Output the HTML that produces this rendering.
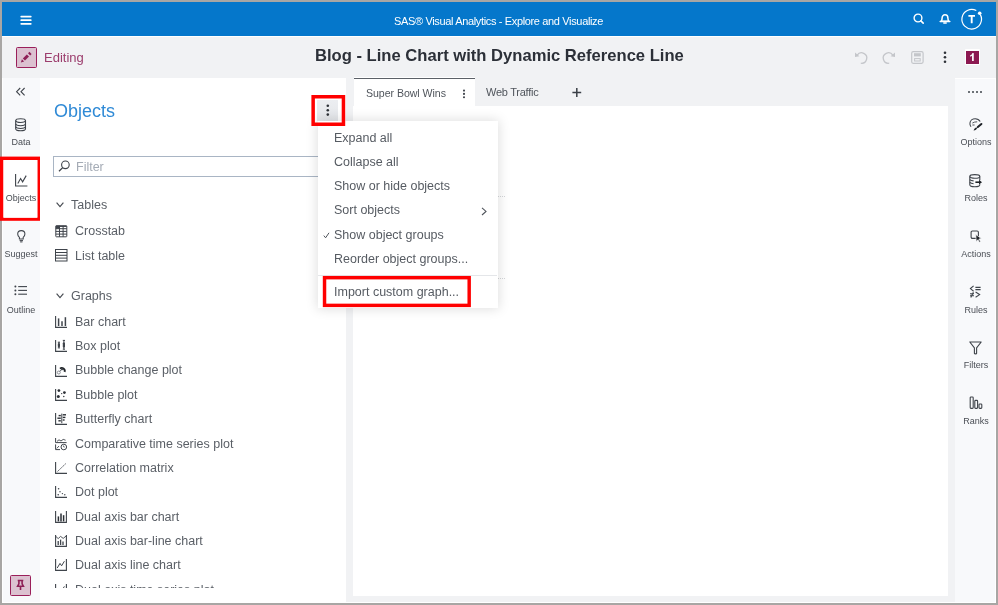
<!DOCTYPE html>
<html><head><meta charset="utf-8">
<style>
html,body{margin:0;padding:0;}
body{width:998px;height:605px;position:relative;overflow:hidden;background:#a8a6a4;font-family:"Liberation Sans",sans-serif;}
.a{position:absolute;}
.t{position:absolute;white-space:nowrap;line-height:1;}
.red{position:absolute;border:3.5px solid #ff0000;box-sizing:border-box;}
.lab{position:absolute;white-space:nowrap;line-height:1;font-size:9px;color:#4a4e55;text-align:center;}
.li{font-size:12.5px;color:#5a5f66;}
.mi{font-size:12.5px;color:#565b62;}
svg{position:absolute;overflow:visible;}
.t,.lab{will-change:transform;}
</style></head><body>
<div class="a" style="left:2px;top:2px;width:994px;height:601px;background:#fff"></div>
<div class="a" style="left:2px;top:2px;width:994.3px;height:33.8px;background:#0577cb"></div>
<div class="a" style="left:2px;top:37.1px;width:994px;height:41px;background:#f1f2f4"></div>
<div class="a" style="left:2.5px;top:78px;width:37.7px;height:523.5px;background:#f8f9fb"></div>
<div class="a" style="left:346.2px;top:78px;width:609px;height:523.8px;background:#f1f2f4"></div>
<div class="a" style="left:954.5px;top:79px;width:40.8px;height:522.5px;background:#f8f9fb"></div>

<svg style="left:20px;top:15px" width="12" height="10" viewBox="0 0 12 10"><g stroke="#fff" stroke-width="1.7" stroke-linecap="round"><line x1="1.2" y1="1.6" x2="10.8" y2="1.6"/><line x1="1.2" y1="5.2" x2="10.8" y2="5.2"/><line x1="1.2" y1="8.8" x2="10.8" y2="8.8"/></g></svg>
<div class="t" style="left:394px;top:15.5px;font-size:11px;color:#fff;letter-spacing:-0.35px">SAS® Visual Analytics - Explore and Visualize</div>
<svg style="left:908px;top:8px" width="20" height="20" viewBox="0 0 20 20"><circle cx="10" cy="10" r="3.9" fill="none" stroke="#fff" stroke-width="1.4"/><line x1="12.9" y1="12.9" x2="15.2" y2="15.1" stroke="#fff" stroke-width="1.6" stroke-linecap="round"/></svg>
<svg style="left:939px;top:14px" width="12" height="10" viewBox="0 0 12 10"><path d="M2.2 7.2 C3 6 3.1 5 3.1 4 C3.1 2 4.3 0.8 6 0.8 C7.7 0.8 8.9 2 8.9 4 C8.9 5 9 6 9.8 7.2 Z" fill="none" stroke="#fff" stroke-width="1.5" stroke-linejoin="round"/><line x1="1.2" y1="7.4" x2="10.8" y2="7.4" stroke="#fff" stroke-width="1.5" stroke-linecap="round"/><path d="M4.8 9 h2.4" stroke="#fff" stroke-width="1.5" stroke-linecap="round"/></svg>
<svg style="left:961px;top:9px" width="22" height="21" viewBox="0 0 22 21"><path d="M19.35 5.60 A9.8 9.8 0 1 1 15.30 1.55" fill="none" stroke="#fff" stroke-width="1.2"/><circle cx="18.7" cy="4.2" r="1.8" fill="#fff"/><path d="M7.4 6.9 h6.6 M10.7 6.9 v7.4" stroke="#fff" stroke-width="1.9"/></svg>
<div class="a" style="left:16px;top:47px;width:21px;height:21px;box-sizing:border-box;border:1.8px solid #9a1f5a;background:#dcc1d0;border-radius:1.5px"></div>
<svg style="left:20px;top:51px" width="13" height="13" viewBox="0 0 13 13"><g stroke="#8e1f56" stroke-width="3.1"><line x1="3.9" y1="8.5" x2="7.9" y2="4.5"/><line x1="9.1" y1="3.3" x2="10.5" y2="1.9"/></g><path d="M0.9 11.5 L1.9 8.3 L4.1 10.5 Z" fill="#8e1f56"/></svg>
<div class="t" style="left:43.5px;top:50.5px;font-size:13px;color:#9c3d6d">Editing</div>
<div class="t" style="left:314.5px;top:47.5px;font-size:16.6px;font-weight:bold;color:#2c3038">Blog - Line Chart with Dynamic Reference Line</div>
<svg style="left:854px;top:51px" width="14" height="13" viewBox="0 0 14 13"><path d="M3.2 4.2 A5.2 5.2 0 1 1 6.8 12.2" fill="none" stroke="#c4c6ca" stroke-width="1.3"/><path d="M1 1.4 L1 6 L5.4 5.2 Z" fill="#c4c6ca"/></svg>
<svg style="left:882px;top:51px" width="14" height="13" viewBox="0 0 14 13"><path d="M10.8 4.2 A5.2 5.2 0 1 0 7.2 12.2" fill="none" stroke="#c4c6ca" stroke-width="1.3"/><path d="M13 1.4 L13 6 L8.6 5.2 Z" fill="#c4c6ca"/></svg>
<svg style="left:911px;top:51px" width="13" height="13" viewBox="0 0 13 13"><rect x="0.7" y="0.7" width="11.4" height="11.6" rx="1.5" fill="none" stroke="#c4c6ca" stroke-width="1.2"/><rect x="3" y="2.2" width="6.8" height="3.2" fill="#c4c6ca"/><rect x="3.6" y="7.6" width="5.6" height="2.4" fill="none" stroke="#c4c6ca" stroke-width="1"/></svg>
<svg style="left:943px;top:51px" width="4" height="13" viewBox="0 0 4 13"><circle cx="2" cy="1.8" r="1.3" fill="#2e3238"/><circle cx="2" cy="6.3" r="1.3" fill="#2e3238"/><circle cx="2" cy="10.8" r="1.3" fill="#2e3238"/></svg>
<div class="a" style="left:965px;top:49.3px;width:15px;height:16px;background:#fff;border-radius:1px"></div>
<div class="a" style="left:966px;top:50.5px;width:12.8px;height:13.7px;background:#8c1951"></div>
<svg style="left:966px;top:50.5px" width="13" height="14" viewBox="0 0 13 14"><path d="M6.9 2.3 V10" stroke="#fff" stroke-width="1.7"/><path d="M7.6 2 L3.9 4.7 L4.6 5.8 L6.9 4.1 Z" fill="#fff"/></svg>
<svg style="left:15px;top:87px" width="11" height="10" viewBox="0 0 11 10"><path d="M5.2 1 L1.6 4.7 L5.2 8.4 M9.6 1 L6 4.7 L9.6 8.4" fill="none" stroke="#3f444b" stroke-width="1.1"/></svg>
<svg style="left:15px;top:117.5px" width="12" height="14" viewBox="0 0 12 14"><g fill="none" stroke="#3f444b" stroke-width="1.1"><ellipse cx="5.6" cy="2.6" rx="4.9" ry="1.9"/><path d="M0.7 2.6 V10.8 C0.7 12 2.9 12.8 5.6 12.8 C8.3 12.8 10.5 12 10.5 10.8 V2.6"/><path d="M0.7 5.8 C0.7 7 2.9 7.7 5.6 7.7 C8.3 7.7 10.5 7 10.5 5.8"/><path d="M0.7 8.6 C0.7 9.8 2.9 10.5 5.6 10.5 C8.3 10.5 10.5 9.8 10.5 8.6"/></g></svg>
<div class="lab" style="left:1.0px;top:138.0px;width:40px">Data</div>
<div class="a" style="left:2.5px;top:157px;width:38px;height:63.5px;background:#fff"></div>
<svg style="left:15px;top:174px" width="13" height="13" viewBox="0 0 13 13"><path d="M0.6 0 V12 H12.4" fill="none" stroke="#3f444b" stroke-width="1.1"/><path d="M2.8 9.5 L5.6 4.5 L7.6 7.8 L11.2 1.6" fill="none" stroke="#3f444b" stroke-width="1.1"/></svg>
<div class="lab" style="left:1.0px;top:194.0px;width:40px">Objects</div>
<svg style="left:0;top:0" width="998" height="605"><rect x="1.70" y="158.30" width="37.40" height="60.80" fill="none" stroke="#ff0000" stroke-width="3.4"/><rect x="4.15" y="160.75" width="32.5" height="56.6" fill="none" stroke="#fff" stroke-width="1.3" opacity="0.8"/></svg>
<svg style="left:16.6px;top:230px" width="9" height="13" viewBox="0 0 9 13"><path d="M2.4 7.4 C1.3 6.4 0.7 5.2 0.7 4 C0.7 1.9 2.4 0.6 4.3 0.6 C6.2 0.6 7.9 1.9 7.9 4 C7.9 5.2 7.3 6.4 6.2 7.4 V9 H2.4 Z" fill="none" stroke="#3f444b" stroke-width="1.05"/><path d="M2.6 10.6 H6 M3.1 11.9 H5.5" stroke="#3f444b" stroke-width="1"/></svg>
<div class="lab" style="left:0.8000000000000007px;top:249.5px;width:40px">Suggest</div>
<svg style="left:14px;top:285px" width="14" height="11" viewBox="0 0 14 11"><g fill="#3f444b"><circle cx="1.4" cy="1.6" r="1"/><circle cx="1.4" cy="5.4" r="1"/><circle cx="1.4" cy="9.2" r="1"/></g><g stroke="#3f444b" stroke-width="1.1"><line x1="4.2" y1="1.6" x2="13" y2="1.6"/><line x1="4.2" y1="5.4" x2="13" y2="5.4"/><line x1="4.2" y1="9.2" x2="13" y2="9.2"/></g></svg>
<div class="lab" style="left:0.8000000000000007px;top:305.5px;width:40px">Outline</div>
<div class="a" style="left:10px;top:575px;width:21px;height:21px;box-sizing:border-box;border:1.8px solid #9a1f5a;background:#dcc1d0;border-radius:1.5px"></div>
<svg style="left:14.2px;top:579px" width="13" height="14" viewBox="0 0 13 14"><path d="M3.7 1.5 H9.3 M4.9 1.5 L4.9 4.8 L3.6 7.2 H9.4 L8.1 4.8 L8.1 1.5 M6.5 7.2 V11" fill="none" stroke="#8e1f56" stroke-width="1.6"/></svg>
<div class="a" style="left:353.5px;top:77.9px;width:121.1px;height:28.1px;background:#fff;border-top:1.85px solid #5b6067;box-sizing:border-box;box-shadow:0 -1px 0 #fff"></div>
<div class="t" style="left:365.7px;top:87.5px;font-size:10.6px;color:#50555c;letter-spacing:-0.05px">Super Bowl Wins</div>
<svg style="left:461.8px;top:88.5px" width="4" height="11" viewBox="0 0 4 11"><circle cx="2" cy="1.6" r="1.05" fill="#3f444b"/><circle cx="2" cy="4.9" r="1.05" fill="#3f444b"/><circle cx="2" cy="8.2" r="1.05" fill="#3f444b"/></svg>
<div class="t" style="left:486px;top:87px;font-size:11px;color:#50555c;letter-spacing:-0.25px">Web Traffic</div>
<svg style="left:572px;top:88px" width="10" height="10" viewBox="0 0 10 10"><path d="M4.8 0 V9 M0.4 4.5 H9.2" stroke="#3a3f46" stroke-width="1.5"/></svg>
<div class="a" style="left:353px;top:106px;width:595px;height:489.7px;background:#fff"></div>
<div class="a" style="left:497px;top:195.5px;width:8px;height:0;border-top:1px dotted #d4d6d9"></div>
<div class="a" style="left:497px;top:277.5px;width:8px;height:0;border-top:1px dotted #d4d6d9"></div>
<div class="a" style="left:40.2px;top:78px;width:306px;height:524px;background:#fff"></div>
<div class="t" style="left:53.5px;top:102px;font-size:18px;color:#2f8ad6">Objects</div>
<div class="a" style="left:317.3px;top:100px;width:21px;height:21px;background:linear-gradient(#eceef1,#e3e5e9)"></div>
<svg style="left:325px;top:103px" width="6" height="14" viewBox="0 0 6 14"><circle cx="2.8" cy="2.7" r="1.3" fill="#2e3238"/><circle cx="2.8" cy="7.2" r="1.3" fill="#2e3238"/><circle cx="2.8" cy="11.6" r="1.3" fill="#2e3238"/></svg>
<div class="a" style="left:53px;top:156px;width:290px;height:20.8px;box-sizing:border-box;border:1px solid #a9b5c4;background:#fff"></div>
<svg style="left:58px;top:160px" width="13" height="12" viewBox="0 0 13 12"><circle cx="7.4" cy="4.8" r="3.8" fill="none" stroke="#3f444b" stroke-width="1.1"/><line x1="4.7" y1="7.6" x2="1" y2="11.2" stroke="#3f444b" stroke-width="1.3"/></svg>
<div class="t" style="left:75.5px;top:160.5px;font-size:12.5px;color:#a4abb5">Filter</div>
<svg style="left:56px;top:202px" width="9" height="6" viewBox="0 0 9 6"><path d="M0.6 0.6 L4 4.7 L7.4 0.6" fill="none" stroke="#464a51" stroke-width="1.15"/></svg>
<div class="t li" style="left:70.5px;top:199px">Tables</div>
<svg style="left:54.5px;top:224.5px" width="13" height="13" viewBox="0 0 13 13"><g fill="none" stroke="#3f444b" stroke-width="1"><rect x="0.8" y="0.8" width="11" height="11" rx="0.6"/><path d="M0.8 3.7 H11.8 M0.8 6.4 H11.8 M0.8 9.1 H11.8 M4.5 0.8 V11.8 M8.1 0.8 V11.8"/></g><rect x="0.8" y="0.8" width="3.7" height="2.9" fill="#3f444b"/><path d="M0.8 1.3 H11.8" stroke="#3f444b" stroke-width="1.3"/></svg>
<div class="t li" style="left:75px;top:225px">Crosstab</div>
<svg style="left:54.5px;top:249px" width="13" height="13" viewBox="0 0 13 13"><g fill="none" stroke="#3f444b" stroke-width="1"><rect x="0.5" y="0.5" width="11.5" height="11.5"/><path d="M0.5 3.5 H12 M0.5 6.3 H12 M0.5 9.1 H12"/></g></svg>
<div class="t li" style="left:75px;top:249.5px">List table</div>
<svg style="left:56px;top:293px" width="9" height="6" viewBox="0 0 9 6"><path d="M0.6 0.6 L4 4.7 L7.4 0.6" fill="none" stroke="#464a51" stroke-width="1.15"/></svg>
<div class="t li" style="left:70.5px;top:290px">Graphs</div>
<div class="a" style="left:40px;top:300px;width:306px;height:288.3px;overflow:hidden">
<svg style="left:14.8px;top:16.0px" width="12" height="12" viewBox="0 0 12 12"><path d="M0.6 0 V11.4 H12" fill="none" stroke="#3f444b" stroke-width="1.1"/><g stroke="#3f444b" stroke-width="1.5"><line x1="3.6" y1="2.4" x2="3.6" y2="10"/><line x1="7" y1="5.2" x2="7" y2="10"/><line x1="10.4" y1="1.2" x2="10.4" y2="10"/></g></svg>
<div class="t li" style="left:35px;top:15.80px">Bar chart</div>
<svg style="left:14.8px;top:40.34px" width="12" height="12" viewBox="0 0 12 12"><path d="M0.6 0 V11.4 H12" fill="none" stroke="#3f444b" stroke-width="1.1"/><g stroke="#3f444b" stroke-width="1"><line x1="3.9" y1="2.2" x2="3.9" y2="7.9"/><line x1="8.9" y1="0.4" x2="8.9" y2="9.2"/><line x1="2.8" y1="2.2" x2="5" y2="2.2"/><line x1="2.8" y1="7.9" x2="5" y2="7.9"/><line x1="7.8" y1="0.4" x2="10" y2="0.4"/><line x1="7.8" y1="9.2" x2="10" y2="9.2"/></g><rect x="2.8" y="3.3" width="2.2" height="3.6" rx="0.6" fill="#3f444b"/><rect x="7.8" y="2.6" width="2.2" height="4.8" rx="0.6" fill="#3f444b"/></svg>
<div class="t li" style="left:35px;top:40.14px">Box plot</div>
<svg style="left:14.8px;top:64.68px" width="12" height="12" viewBox="0 0 12 12"><path d="M0.6 0 V11.4 H12" fill="none" stroke="#3f444b" stroke-width="1.1"/><path d="M4.97 3.61 A2.9 2.9 0 0 1 9.56 6.82" fill="none" stroke="#1f2328" stroke-width="1.9"/><circle cx="7" cy="4.2" r="1.1" fill="#3f444b"/><line x1="6.2" y1="5" x2="4.4" y2="6.8" stroke="#3f444b" stroke-width="0.9"/><circle cx="3.8" cy="7.5" r="1.5" fill="none" stroke="#8a8e94" stroke-width="1"/></svg>
<div class="t li" style="left:35px;top:64.48px">Bubble change plot</div>
<svg style="left:14.8px;top:89.02px" width="12" height="12" viewBox="0 0 12 12"><path d="M0.6 0 V11.4 H12" fill="none" stroke="#3f444b" stroke-width="1.1"/><g fill="#2a2e34"><circle cx="3.9" cy="1.6" r="1.4"/><circle cx="9.4" cy="3.6" r="1.4"/><circle cx="3.3" cy="7.6" r="1.5"/><circle cx="6.7" cy="4.6" r="0.65"/><circle cx="8.8" cy="7.5" r="0.7"/></g></svg>
<div class="t li" style="left:35px;top:88.82px">Bubble plot</div>
<svg style="left:14.8px;top:113.36px" width="12" height="12" viewBox="0 0 12 12"><path d="M0.6 0 V11.4 H12" fill="none" stroke="#3f444b" stroke-width="1.1"/><line x1="6.8" y1="0.6" x2="6.8" y2="10.2" stroke="#3f444b" stroke-width="1"/><g stroke="#2a2e34" stroke-width="1.4"><line x1="3.6" y1="2.6" x2="5.8" y2="2.6"/><line x1="2.4" y1="5.2" x2="5.8" y2="5.2"/><line x1="3.4" y1="7.8" x2="5.8" y2="7.8"/><line x1="7.8" y1="1.8" x2="11" y2="1.8"/><line x1="7.8" y1="4.4" x2="10.4" y2="4.4"/><line x1="7.8" y1="7" x2="9.6" y2="7"/></g></svg>
<div class="t li" style="left:35px;top:113.16px">Butterfly chart</div>
<svg style="left:14.8px;top:137.7px" width="12" height="12" viewBox="0 0 12 12"><path d="M0.6 0 V4.6 H11.6" fill="none" stroke="#3f444b" stroke-width="1"/><path d="M2 3.4 L4 1.8 L6 3 L8.2 1.4 L10.6 2.2" fill="none" stroke="#3f444b" stroke-width="0.9"/><path d="M0.6 6.4 V11.6 H5" fill="none" stroke="#3f444b" stroke-width="1"/><path d="M1.8 10.4 L4 8" fill="none" stroke="#3f444b" stroke-width="0.9"/><circle cx="8.8" cy="9" r="2.8" fill="none" stroke="#3f444b" stroke-width="1"/><path d="M8.4 7.6 L9.2 9.4" stroke="#3f444b" stroke-width="1"/></svg>
<div class="t li" style="left:35px;top:137.50px">Comparative time series plot</div>
<svg style="left:14.8px;top:162.04px" width="12" height="12" viewBox="0 0 12 12"><path d="M0.6 0 V11.4 H12" fill="none" stroke="#3f444b" stroke-width="1.1"/><path d="M2.6 9.4 L10.8 1.6" fill="none" stroke="#3f444b" stroke-width="1" stroke-dasharray="1.6 1"/></svg>
<div class="t li" style="left:35px;top:161.84px">Correlation matrix</div>
<svg style="left:14.8px;top:186.38px" width="12" height="12" viewBox="0 0 12 12"><path d="M0.6 0 V11.4 H12" fill="none" stroke="#3f444b" stroke-width="1.1"/><g fill="#3f444b"><circle cx="3.6" cy="2.8" r="0.8"/><circle cx="5" cy="5.8" r="0.7"/><circle cx="3.2" cy="8.8" r="0.8"/><circle cx="7.4" cy="7.6" r="0.7"/><circle cx="9.8" cy="8.8" r="0.7"/></g></svg>
<div class="t li" style="left:35px;top:186.18px">Dot plot</div>
<svg style="left:14.8px;top:210.72px" width="12" height="12" viewBox="0 0 12 12"><path d="M0.6 0 V11.4 H11.4 V0" fill="none" stroke="#3f444b" stroke-width="1.1"/><g stroke="#2a2e34" stroke-width="1.5"><line x1="3.4" y1="5.4" x2="3.4" y2="10.4"/><line x1="6" y1="2.4" x2="6" y2="10.4"/><line x1="8.6" y1="4.2" x2="8.6" y2="10.4"/></g></svg>
<div class="t li" style="left:35px;top:210.52px">Dual axis bar chart</div>
<svg style="left:14.8px;top:235.06px" width="12" height="12" viewBox="0 0 12 12"><path d="M0.6 0 V11.4 H11.4 V0" fill="none" stroke="#3f444b" stroke-width="1.1"/><g stroke="#3f444b" stroke-width="1.3"><line x1="3.2" y1="6" x2="3.2" y2="10"/><line x1="5.6" y1="4.6" x2="5.6" y2="10"/><line x1="8" y1="6.4" x2="8" y2="10"/></g><path d="M0.6 1.2 L3.2 3.6 L5.6 1.4 L8.2 3.4 L11.4 0.8" fill="none" stroke="#3f444b" stroke-width="0.9"/></svg>
<div class="t li" style="left:35px;top:234.86px">Dual axis bar-line chart</div>
<svg style="left:14.8px;top:259.4px" width="12" height="12" viewBox="0 0 12 12"><path d="M0.6 0 V11.4 H11.4 V0" fill="none" stroke="#3f444b" stroke-width="1.1"/><path d="M2.2 9 L5 4.4 L6.6 6.8 L9.4 2.2" fill="none" stroke="#3f444b" stroke-width="1"/></svg>
<div class="t li" style="left:35px;top:259.20px">Dual axis line chart</div>
<svg style="left:14.8px;top:283.74px" width="12" height="12" viewBox="0 0 12 12"><g stroke="#3f444b" stroke-width="1.1"><line x1="0.6" y1="0" x2="0.6" y2="11.4"/><line x1="11.4" y1="0" x2="11.4" y2="11.4"/></g><path d="M2.6 9 L4.6 5 L6.6 7 L9.4 2.4" fill="none" stroke="#3f444b" stroke-width="1"/></svg>
<div class="t li" style="left:35px;top:283.54px">Dual axis time series plot</div>
</div>
<div class="a" style="left:317.8px;top:120.7px;width:180.4px;height:187.2px;background:#fff;box-shadow:0 0 11px 1px rgba(0,0,0,0.13)"></div>
<div class="t mi" style="left:333.5px;top:132.3px">Expand all</div>
<div class="t mi" style="left:333.5px;top:155.6px">Collapse all</div>
<div class="t mi" style="left:333.5px;top:180.1px">Show or hide objects</div>
<div class="t mi" style="left:333.5px;top:204.4px">Sort objects</div>
<div class="t mi" style="left:333.5px;top:228.6px">Show object groups</div>
<div class="t mi" style="left:333.5px;top:253.1px">Reorder object groups...</div>
<svg style="left:480.5px;top:206.5px" width="7" height="9" viewBox="0 0 7 9"><path d="M1 0.8 L5 4.4 L1 8" fill="none" stroke="#50555c" stroke-width="1.1"/></svg>
<svg style="left:322.5px;top:232px" width="7" height="7" viewBox="0 0 7 7"><path d="M0.8 3.6 L2.6 5.8 L6 0.8" fill="none" stroke="#50555c" stroke-width="1"/></svg>
<div class="a" style="left:318px;top:275px;width:179px;height:1px;background:#e4e6e9"></div>
<div class="t mi" style="left:333.5px;top:286.3px">Import custom graph...</div>
<svg style="left:0;top:0" width="998" height="605"><rect x="324.53" y="277.68" width="144.65" height="27.70" fill="none" stroke="#ff0000" stroke-width="3.45"/></svg>
<svg style="left:0;top:0" width="998" height="605"><rect x="313.15" y="96.75" width="30.30" height="27.50" fill="none" stroke="#ff0000" stroke-width="3.5"/></svg>
<svg style="left:967px;top:90px" width="17" height="4" viewBox="0 0 17 4"><g fill="#3f444b"><circle cx="2" cy="2" r="1"/><circle cx="6" cy="2" r="1"/><circle cx="10" cy="2" r="1"/><circle cx="14" cy="2" r="1"/></g></svg>
<svg style="left:968.5px;top:117.5px" width="14" height="14" viewBox="0 0 14 14"><path d="M2 8.8 C1.2 7.6 0.8 6.4 0.9 5.4 C1.1 2.4 3.6 0.7 6.2 0.7 C8.2 0.7 10.2 1.8 11.2 3.6" fill="none" stroke="#3f444b" stroke-width="1.1"/><path d="M3.4 5 C4.6 4.2 6.4 3.8 8.2 3.8 M3.4 7 H5.6" fill="none" stroke="#3f444b" stroke-width="0.9"/><line x1="12.4" y1="6" x2="8.8" y2="9.1" stroke="#1f2328" stroke-width="2" stroke-linecap="round"/><path d="M8.2 9.8 C7.8 11.4 6.6 12.6 4.6 12.6 C4.8 11.2 5.8 9.9 7.2 9.4 Z" fill="#1f2328"/></svg>
<div class="lab" style="left:955.5px;top:138.0px;width:40px">Options</div>
<svg style="left:968.5px;top:173.5px" width="14" height="14" viewBox="0 0 14 14"><g fill="none" stroke="#3f444b" stroke-width="1.1"><ellipse cx="5.8" cy="2.4" rx="5" ry="1.8"/><path d="M0.8 2.4 V10.8 C0.8 12 3 12.8 5.8 12.8 C8.6 12.8 10.8 12 10.8 10.8 V10.2 M10.8 2.4 V6"/><path d="M0.8 5.6 C1.6 6.4 3 6.8 4.6 6.9 M0.8 8.4 C1.6 9.2 3 9.6 4.6 9.7"/></g><path d="M6.4 8.2 H10.6" stroke="#1f2328" stroke-width="1.6"/><path d="M10 5.8 L13 8.2 L10 10.6 Z" fill="#1f2328"/></svg>
<div class="lab" style="left:955.5px;top:194.0px;width:40px">Roles</div>
<svg style="left:969.5px;top:229.5px" width="13" height="13" viewBox="0 0 13 13"><rect x="1.1" y="1" width="7.3" height="7.4" rx="1.3" fill="none" stroke="#3f444b" stroke-width="1.1"/><path d="M5.8 4.6 L11.4 8.6 L8.9 9.1 L10.6 11.6 L9.5 12.3 L7.9 9.8 L6.2 11.6 Z" fill="#1f2328" stroke="#f8f9fb" stroke-width="0.7"/></svg>
<div class="lab" style="left:955.5px;top:250.0px;width:40px">Actions</div>
<svg style="left:969px;top:284.5px" width="14" height="14" viewBox="0 0 14 14"><g fill="none" stroke="#3f444b" stroke-width="1.1"><path d="M4.6 0.8 L1.4 3.6 L4.6 6.2"/><path d="M6.4 2.4 H11.6 M6.4 4.6 H11.6"/><path d="M1 8.8 H5 M1 10.8 H5 M4.4 7.2 L1.8 12.6"/><path d="M6.6 7 L10.6 9.6 L6.6 12.2"/></g></svg>
<div class="lab" style="left:955.5px;top:305.5px;width:40px">Rules</div>
<svg style="left:969px;top:340.5px" width="13" height="14" viewBox="0 0 13 14"><path d="M0.8 1 H12.2 L7.6 6.8 V12.4 C7.6 13 5.4 13 5.4 12.4 V6.8 Z" fill="none" stroke="#3f444b" stroke-width="1.1" stroke-linejoin="round"/></svg>
<div class="lab" style="left:955.5px;top:361.0px;width:40px">Filters</div>
<svg style="left:968.5px;top:396px" width="14" height="13" viewBox="0 0 14 13"><g fill="none" stroke="#3f444b" stroke-width="1.1"><rect x="1.2" y="1" width="3" height="11.4" rx="0.8"/><rect x="5.8" y="4.4" width="2.8" height="8" rx="0.8"/><rect x="10" y="8" width="2.8" height="4.4" rx="0.8"/></g></svg>
<div class="lab" style="left:955.5px;top:417.0px;width:40px">Ranks</div>
</body></html>
